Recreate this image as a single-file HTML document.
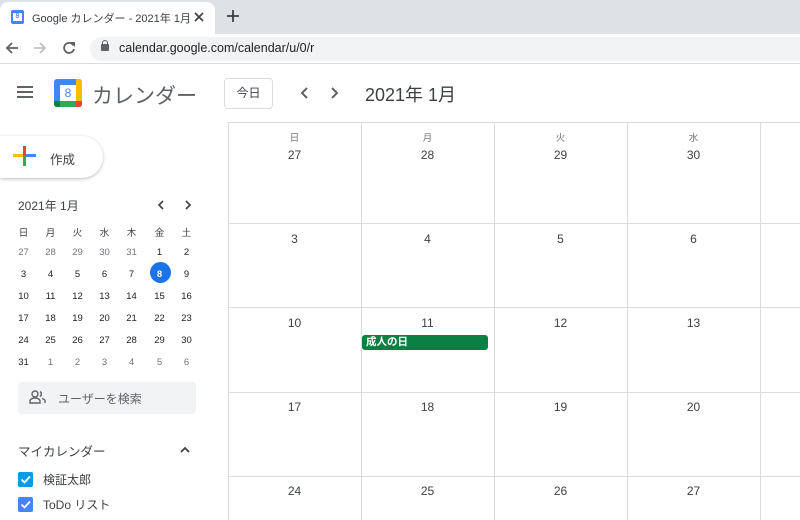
<!DOCTYPE html>
<html><head><meta charset="utf-8"><style>
*{margin:0;padding:0;box-sizing:border-box}
body{width:800px;height:520px;overflow:hidden;background:#fff;font-family:"Liberation Sans","Noto Sans CJK JP",sans-serif;color:#3c4043;position:relative}
.abs{position:absolute}
.tabbar{left:0;top:0;width:800px;height:34px;background:#dee1e6}
.tab{left:0;top:2px;width:215px;height:32px;background:#fff;border-radius:8px 8px 0 0}
.addr{left:0;top:34px;width:800px;height:30px;background:#fff;border-bottom:1px solid #dadce0}
.url{left:90px;top:37px;width:720px;height:24px;background:#f1f3f4;border-radius:12px}
.mini div{position:absolute;width:27px;text-align:center;font-size:9.5px;color:#3c4043}
.grid .v{position:absolute;top:122px;width:1px;height:398px;background:#dadce0}
.grid .h{position:absolute;left:228px;width:572px;height:1px;background:#dadce0}
.d{position:absolute;width:133px;text-align:center;font-size:12px;color:#3c4043}
.wd{font-size:9.5px;color:#70757a}
</style></head><body>
<div class="abs tabbar"></div>
<div class="abs tab"></div>
<div class="abs" style="left:11px;top:10px;width:13px;height:14px;background:#4285f4;border-radius:2px"><div style="position:absolute;left:2px;top:3px;width:9px;height:8px;background:#fff;font-size:7px;text-align:center;color:#1a73e8;line-height:8px">8</div></div>
<div class="abs" style="left:32px;top:10px;font-size:11px;color:#3c4043">Google カレンダー - 2021年 1月</div>
<svg class="abs" style="left:194px;top:12px" width="10" height="10"><path d="M1 1L9 9M9 1L1 9" stroke="#3c4043" stroke-width="1.6"/></svg>
<svg class="abs" style="left:227px;top:10px" width="12" height="12"><path d="M6 0V12M0 6H12" stroke="#3c4043" stroke-width="1.8"/></svg>
<div class="abs addr"></div>
<div class="abs url"></div>
<svg class="abs" style="left:5px;top:41px" width="14" height="14"><path d="M13 7H2M7 2L2 7L7 12" stroke="#5f6368" stroke-width="1.8" fill="none"/></svg>
<svg class="abs" style="left:33px;top:41px" width="14" height="14"><path d="M1 7H12M7 2L12 7L7 12" stroke="#bdc1c6" stroke-width="1.8" fill="none"/></svg>
<svg class="abs" style="left:62px;top:41px" width="14" height="14"><path d="M11.5 4.5A5 5 0 1 0 12 8" stroke="#5f6368" stroke-width="1.8" fill="none"/><path d="M8 1H13V6Z" fill="#5f6368"/></svg>
<div class="abs" style="left:101px;top:44px;width:8px;height:7px;background:#5f6368;border-radius:1px"></div>
<div class="abs" style="left:102px;top:40px;width:6px;height:6px;border:1.5px solid #5f6368;border-bottom:none;border-radius:3px 3px 0 0"></div>
<div class="abs" style="left:119px;top:41px;font-size:12.5px;color:#202124">calendar.google.com/calendar/u/0/r</div>

<div class="abs" style="left:17px;top:86px;width:16px;height:2px;background:#5f6368;box-shadow:0 5px 0 #5f6368,0 10px 0 #5f6368"></div>
<div class="abs" style="left:54px;top:79px;width:28px;height:28px;background:#4285f4;border-radius:3px;overflow:hidden">
<div style="position:absolute;right:0;top:0;width:6px;height:28px;background:#fbbc04"></div>
<div style="position:absolute;left:0;bottom:0;width:28px;height:6px;background:#34a853"></div>
<div style="position:absolute;left:0;bottom:0;width:6px;height:6px;background:#188038"></div>
<div style="position:absolute;right:0;bottom:0;width:6px;height:6px;background:#ea4335"></div>
<div style="position:absolute;left:6px;top:6px;width:16px;height:16px;background:#fff;color:#4285f4;font-size:12px;text-align:center;line-height:16px">8</div></div>
<div class="abs" style="left:92px;top:80px;font-size:21px;color:#5f6368">カレンダー</div>
<div class="abs" style="left:224px;top:78px;width:49px;height:31px;border:1px solid #dadce0;border-radius:4px;font-size:12px;text-align:center;line-height:29px;color:#3c4043">今日</div>
<svg class="abs" style="left:300px;top:87px" width="10" height="12"><path d="M7 1L2 6L7 11" stroke="#5f6368" stroke-width="2" fill="none"/></svg>
<svg class="abs" style="left:329px;top:87px" width="10" height="12"><path d="M3 1L8 6L3 11" stroke="#5f6368" stroke-width="2" fill="none"/></svg>
<div class="abs" style="left:365px;top:81px;font-size:18px;color:#3c4043">2021年 1月</div>

<div class="abs" style="left:0;top:136px;width:103px;height:42px;border-radius:0 21px 21px 0;box-shadow:0 1px 3px rgba(60,64,67,.35);background:#fff"></div>
<div class="abs" style="left:23px;top:146px;width:3px;height:20px;background:#ea4335"></div>
<div class="abs" style="left:23px;top:155px;width:3px;height:11px;background:#34a853"></div>
<div class="abs" style="left:13px;top:154px;width:10px;height:3px;background:#fbbc04"></div>
<div class="abs" style="left:26px;top:154px;width:10px;height:3px;background:#4285f4"></div>
<div class="abs" style="left:50px;top:149px;font-size:12.5px;color:#3c4043">作成</div>

<div class="abs" style="left:18px;top:197px;font-size:12px;color:#3c4043">2021年 1月</div>
<svg class="abs" style="left:157px;top:200px" width="8" height="10"><path d="M6 1L2 5L6 9" stroke="#3c4043" stroke-width="1.6" fill="none"/></svg>
<svg class="abs" style="left:184px;top:200px" width="8" height="10"><path d="M2 1L6 5L2 9" stroke="#3c4043" stroke-width="1.6" fill="none"/></svg>
<div class="abs" style="left:150px;top:262px;width:21px;height:21px;border-radius:50%;background:#1a73e8"></div>
<div class="mini" id="mini"></div>

<div class="abs" style="left:18px;top:382px;width:178px;height:32px;background:#f1f3f4;border-radius:4px"></div>
<svg class="abs" style="left:29px;top:390px" width="18" height="14"><circle cx="6" cy="4" r="3" stroke="#5f6368" stroke-width="1.4" fill="none"/><path d="M1 13V11C1 9 4 8 6 8S11 9 11 11V13Z" stroke="#5f6368" stroke-width="1.4" fill="none"/><path d="M11 1.5A3 3 0 0 1 11 6.5M13 8.5C15 9 16 10 16 11V13" stroke="#5f6368" stroke-width="1.4" fill="none"/></svg>
<div class="abs" style="left:58px;top:390px;font-size:12px;color:#5f6368">ユーザーを検索</div>
<div class="abs" style="left:18px;top:441px;font-size:12.5px;color:#3c4043">マイカレンダー</div>
<svg class="abs" style="left:180px;top:446px" width="10" height="7"><path d="M1 6L5 2L9 6" stroke="#3c4043" stroke-width="1.8" fill="none"/></svg>
<div class="abs" style="left:18px;top:472px;width:15px;height:15px;background:#039be5;border-radius:2px"></div>
<svg class="abs" style="left:18px;top:472px" width="15" height="15"><path d="M3.5 7.5L6.5 10.5L12 4.5" stroke="#fff" stroke-width="1.8" fill="none"/></svg>
<div class="abs" style="left:43px;top:471px;font-size:12px;color:#3c4043">検証太郎</div>
<div class="abs" style="left:18px;top:497px;width:15px;height:15px;background:#4285f4;border-radius:2px"></div>
<svg class="abs" style="left:18px;top:497px" width="15" height="15"><path d="M3.5 7.5L6.5 10.5L12 4.5" stroke="#fff" stroke-width="1.8" fill="none"/></svg>
<div class="abs" style="left:43px;top:496px;font-size:12px;color:#3c4043">ToDo リスト</div>

<div class="grid">
<div class="h" style="top:122px"></div><div class="h" style="top:223px"></div><div class="h" style="top:307px"></div><div class="h" style="top:392px"></div><div class="h" style="top:476px"></div>
<div class="v" style="left:228px"></div><div class="v" style="left:361px"></div><div class="v" style="left:494px"></div><div class="v" style="left:627px"></div><div class="v" style="left:760px"></div>
</div>
<div id="big"></div>
<div class="abs" style="left:362px;top:335px;width:126px;height:15px;background:#0b8043;border-radius:3px;color:#fff;font-size:10.5px;font-weight:bold;line-height:15px;padding-left:4px">成人の日</div>
<script>
var m=document.getElementById('mini'),h='';
var wd=['日','月','火','水','木','金','土'],xs=[10,37,64,91,118,146,173];
for(var i=0;i<7;i++)h+='<div style="left:'+xs[i]+'px;top:225px">'+wd[i]+'</div>';
var days=[27,28,29,30,31,1,2];for(var d=3;d<=31;d++)days.push(d);days.push(1,2,3,4,5,6);
for(var k=0;k<42;k++){var r=Math.floor(k/7),c=k%7;var gray=(k<5||k>=36);var st='left:'+xs[c]+'px;top:'+(247+r*22)+'px;';
if(days[k]==8&&!gray)st+='color:#fff;font-weight:bold;';else if(gray)st+='color:#70757a;';else st+='color:#202124;';
h+='<div style="'+st+'">'+days[k]+'</div>';}
m.innerHTML=h;
var b='',cx=[228,361,494,627],wn=['日','月','火','水'];
for(var i=0;i<4;i++){b+='<div class="d wd" style="left:'+cx[i]+'px;top:130px">'+wn[i]+'</div>';b+='<div class="d" style="left:'+cx[i]+'px;top:148px">'+[27,28,29,30][i]+'</div>';}
var rows=[[3,4,5,6],[10,11,12,13],[17,18,19,20],[24,25,26,27]],ty=[232,316,400,484];
for(var r=0;r<4;r++)for(var i=0;i<4;i++)b+='<div class="d" style="left:'+cx[i]+'px;top:'+ty[r]+'px">'+rows[r][i]+'</div>';
document.getElementById('big').innerHTML=b;
</script>
</body></html>
